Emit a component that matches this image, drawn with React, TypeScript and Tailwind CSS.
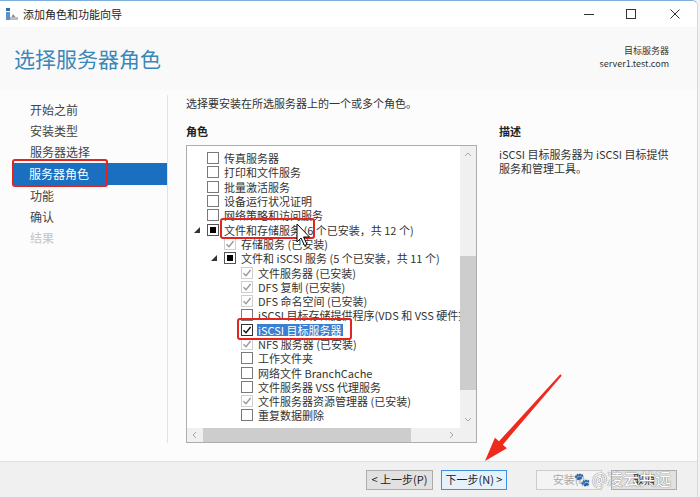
import React from "react";

type State = "none" | "checked" | "installed" | "partial";
type Row = { level: 0 | 1 | 2; label: string; state: State; expander?: boolean; selected?: boolean };

const rows: Row[] = [
  { level: 0, label: "传真服务器", state: "none" },
  { level: 0, label: "打印和文件服务", state: "none" },
  { level: 0, label: "批量激活服务", state: "none" },
  { level: 0, label: "设备运行状况证明", state: "none" },
  { level: 0, label: "网络策略和访问服务", state: "none" },
  { level: 0, label: "文件和存储服务 (6 个已安装，共 12 个)", state: "partial", expander: true },
  { level: 1, label: "存储服务 (已安装)", state: "installed" },
  { level: 1, label: "文件和 iSCSI 服务 (5 个已安装，共 11 个)", state: "partial", expander: true },
  { level: 2, label: "文件服务器 (已安装)", state: "installed" },
  { level: 2, label: "DFS 复制 (已安装)", state: "installed" },
  { level: 2, label: "DFS 命名空间 (已安装)", state: "installed" },
  { level: 2, label: "iSCSI 目标存储提供程序(VDS 和 VSS 硬件提供程序)", state: "none" },
  { level: 2, label: "iSCSI 目标服务器", state: "checked", selected: true },
  { level: 2, label: "NFS 服务器 (已安装)", state: "installed" },
  { level: 2, label: "工作文件夹", state: "none" },
  { level: 2, label: "网络文件 BranchCache", state: "none" },
  { level: 2, label: "文件服务器 VSS 代理服务", state: "none" },
  { level: 2, label: "文件服务器资源管理器 (已安装)", state: "installed" },
  { level: 2, label: "重复数据删除", state: "none" },
];

const indent = { 0: "pl-[7px]", 1: "pl-[24px]", 2: "pl-[41px]" };

const steps = [
  { label: "开始之前" },
  { label: "安装类型" },
  { label: "服务器选择" },
  { label: "服务器角色", active: true },
  { label: "功能" },
  { label: "确认" },
  { label: "结果", disabled: true },
];

function Check({ color }: { color: string }) {
  return (
    <svg width="10" height="10" viewBox="0 0 10 10">
      <path d="M1.5 5.2 L4 7.8 L8.6 2" fill="none" stroke={color} strokeWidth="1.4" />
    </svg>
  );
}

function Box({ state }: { state: State }) {
  if (state === "partial")
    return (
      <span className="flex h-[12px] w-[12px] shrink-0 items-center justify-center border border-[#555] bg-white">
        <span className="h-[6px] w-[6px] bg-black" />
      </span>
    );
  if (state === "installed")
    return (
      <span className="flex h-[12px] w-[12px] shrink-0 items-center justify-center border border-[#cfcfcf] bg-white">
        <Check color="#9a9a9a" />
      </span>
    );
  if (state === "checked")
    return (
      <span className="flex h-[12px] w-[12px] shrink-0 items-center justify-center border border-[#333] bg-white">
        <Check color="#111" />
      </span>
    );
  return <span className="h-[12px] w-[12px] shrink-0 border border-[#7a7a7a] bg-white" />;
}

function Chevron({ dir }: { dir: "up" | "down" | "left" | "right" }) {
  const d = {
    up: "M1 5 L4 2 L7 5",
    down: "M1 2 L4 5 L7 2",
    left: "M5 1 L2 4 L5 7",
    right: "M2 1 L5 4 L2 7",
  }[dir];
  return (
    <svg width="8" height="8" viewBox="0 0 8 8">
      <path d={d} fill="none" stroke="#a6a6a6" strokeWidth="1" />
    </svg>
  );
}

export default function App() {
  return (
    <div className="relative h-[497px] w-[700px] overflow-hidden bg-[#f3f3f3] font-['Noto_Sans_CJK_SC','Noto_Sans',sans-serif] text-[#333]">
      <div className="flex h-full w-[698px] flex-col overflow-hidden rounded-tr-[6px] border-r border-t border-[#d7d7d7] border-t-[#7eaedb] bg-[#fcfcfc]">
        {/* title bar */}
        <div className="flex h-[26px] items-center bg-white">
          <svg className="ml-[5px]" width="14" height="14" viewBox="0 0 14 14">
            <rect x="1" y="1" width="4" height="3" fill="#2a6db5" />
            <rect x="1" y="5" width="4" height="8" fill="#5f8fc4" />
            <path d="M5 13 L8 7 L13 13 Z" fill="#8a8f96" />
            <rect x="5" y="10" width="8" height="3" fill="#b9bec4" />
          </svg>
          <span className="ml-[4px] text-[11px] leading-none text-[#222]">添加角色和功能向导</span>
          <div className="ml-auto flex items-center">
            <svg className="mr-[32px]" width="10" height="10" viewBox="0 0 10 10">
              <path d="M0 5.5 H10" stroke="#333" strokeWidth="1" />
            </svg>
            <svg className="mr-[34px]" width="10" height="10" viewBox="0 0 10 10">
              <rect x="0.5" y="0.5" width="9" height="9" fill="none" stroke="#333" strokeWidth="1" />
            </svg>
            <svg className="mr-[17px]" width="10" height="10" viewBox="0 0 10 10">
              <path d="M0.5 0.5 L9.5 9.5 M9.5 0.5 L0.5 9.5" stroke="#333" strokeWidth="1" />
            </svg>
          </div>
        </div>

        {/* header */}
        <div className="flex h-[63px] items-center justify-between bg-[#f9f9f9] pl-[14px] pr-[28px]">
          <h1 className="text-[21px] leading-none text-[#3a87b9]">选择服务器角色</h1>
          <div className="-mt-[4px] text-right text-[9px] leading-[13px] text-[#333]">
            <div>目标服务器</div>
            <div>server1.test.com</div>
          </div>
        </div>

        {/* body */}
        <div className="flex flex-1 pb-[18px]">
          <nav className="mt-[5px] w-[168px] border-r border-[#e2e2e2] pt-[4px] text-[12px]">
            {steps.map((s) => (
              <div
                key={s.label}
                className={
                  s.active
                    ? "ml-[13px] flex h-[22px] items-center bg-[#1a6fc0] pl-[16px] text-white"
                    : `flex h-[21.3px] items-center pl-[30px] ${s.disabled ? "text-[#c4c4c4]" : "text-[#444]"}`
                }
              >
                {s.label}
              </div>
            ))}
          </nav>

          <div className="flex flex-1 flex-col pl-[18px] pt-[6px]">
            <p className="text-[11px] leading-[14px] text-[#333]">选择要安装在所选服务器上的一个或多个角色。</p>
            <div className="mt-[14px] flex flex-1">
              <div className="flex w-[291px] flex-col">
                <div className="text-[11px] font-bold leading-[14px] text-[#222]">角色</div>
                <div className="mt-[7px] flex flex-1 flex-col border border-[#adadad] bg-white">
                  <div className="flex flex-1">
                    <div className="min-w-0 flex-1 overflow-hidden pt-[5px] text-[11px]">
                      {rows.map((r) => (
                        <div key={r.label} className={`flex h-[14.3px] items-center whitespace-nowrap ${indent[r.level]}`}>
                          <span className="flex w-[13px] shrink-0 items-center">
                            {r.expander && (
                              <svg width="6" height="6" viewBox="0 0 6 6">
                                <path d="M6 0 L6 6 L0 6 Z" fill="#333" />
                              </svg>
                            )}
                          </span>
                          <Box state={r.state} />
                          <span
                            className={
                              r.selected
                                ? "ml-[4px] shrink-0 bg-[#3a7fd1] px-[1px] leading-[12px] text-white"
                                : "ml-[5px] shrink-0 leading-[14px] text-[#333]"
                            }
                          >
                            {r.label}
                          </span>
                        </div>
                      ))}
                    </div>
                    <div className="flex w-[16px] shrink-0 flex-col bg-[#f0f0f0]">
                      <div className="flex h-[17px] items-center justify-center">
                        <Chevron dir="up" />
                      </div>
                      <div className="h-[93px]" />
                      <div className="h-[134px] bg-[#cdcdcd]" />
                      <div className="flex-1" />
                      <div className="flex h-[17px] items-center justify-center">
                        <Chevron dir="down" />
                      </div>
                    </div>
                  </div>
                  <div className="flex h-[14px] bg-[#f0f0f0]">
                    <div className="flex w-[16px] items-center justify-center">
                      <Chevron dir="left" />
                    </div>
                    <div className="w-[208px] bg-[#cdcdcd]" />
                    <div className="flex-1" />
                    <div className="flex w-[16px] items-center justify-center">
                      <Chevron dir="right" />
                    </div>
                    <div className="w-[16px] bg-[#f0f0f0]" />
                  </div>
                </div>
              </div>
              <div className="ml-[22px] w-[175px]">
                <div className="text-[11px] font-bold leading-[14px] text-[#222]">描述</div>
                <p className="mt-[9px] text-[11px] leading-[14px] text-[#333]">
                  iSCSI 目标服务器为 iSCSI 目标提供服务和管理工具。
                </p>
              </div>
            </div>
          </div>
        </div>

        {/* footer */}
        <div className="flex h-[36px] items-center justify-end border-t border-[#dfdfdf] bg-[#f0f0f0] pr-[20px] text-[11px]">
          <button className="h-[20px] w-[67px] border border-[#adadad] bg-[#e1e1e1] text-[#222]">&lt; 上一步(P)</button>
          <button className="ml-[8px] h-[20px] w-[66px] border border-[#3c8ee0] bg-[#e5f1fb] text-[#222]">下一步(N) &gt;</button>
          <button className="ml-[29px] h-[20px] w-[66px] border border-[#cccccc] bg-[#f4f4f4] text-[#a8a8a8]">安装(I)</button>
          <button className="ml-[9px] h-[20px] w-[66px] border border-[#adadad] bg-[#e1e1e1] text-[#222]">取消</button>
        </div>
      </div>

      {/* annotations */}
      <div className="absolute left-[12px] top-[159px] h-[28px] w-[96px] rounded-[3px] border-2 border-[#e3241f]" />
      <div className="absolute left-[220px] top-[218px] h-[21px] w-[95px] rounded-[3px] border-2 border-[#e3241f]" />
      <div className="absolute left-[237px] top-[318px] h-[22px] w-[115px] rounded-[3px] border-2 border-[#e3241f]" />

      <svg className="pointer-events-none absolute left-0 top-0" width="700" height="497" viewBox="0 0 700 497">
        <polygon
          points="561.7,375.7 502.8,444.7 506.9,448.3 485,461 494.9,437.7 499,441.3 560.3,374.3"
          fill="#ee2a1f"
        />
        <path
          d="M297 224 L297 242 L301 238 L304.5 245.5 L307 244.5 L303.6 237 L309.5 237 Z"
          fill="#fff"
          stroke="#000"
          strokeWidth="1"
        />
      </svg>

      <div className="pointer-events-none absolute left-[574px] top-[470px] flex items-center text-[16px] leading-none text-white [text-shadow:0_0_1px_#777,0_0_1px_#777]">
        <span className="mr-[2px] text-[13px]">🐾</span>
        <span>@凌云共远</span>
      </div>
    </div>
  );
}
